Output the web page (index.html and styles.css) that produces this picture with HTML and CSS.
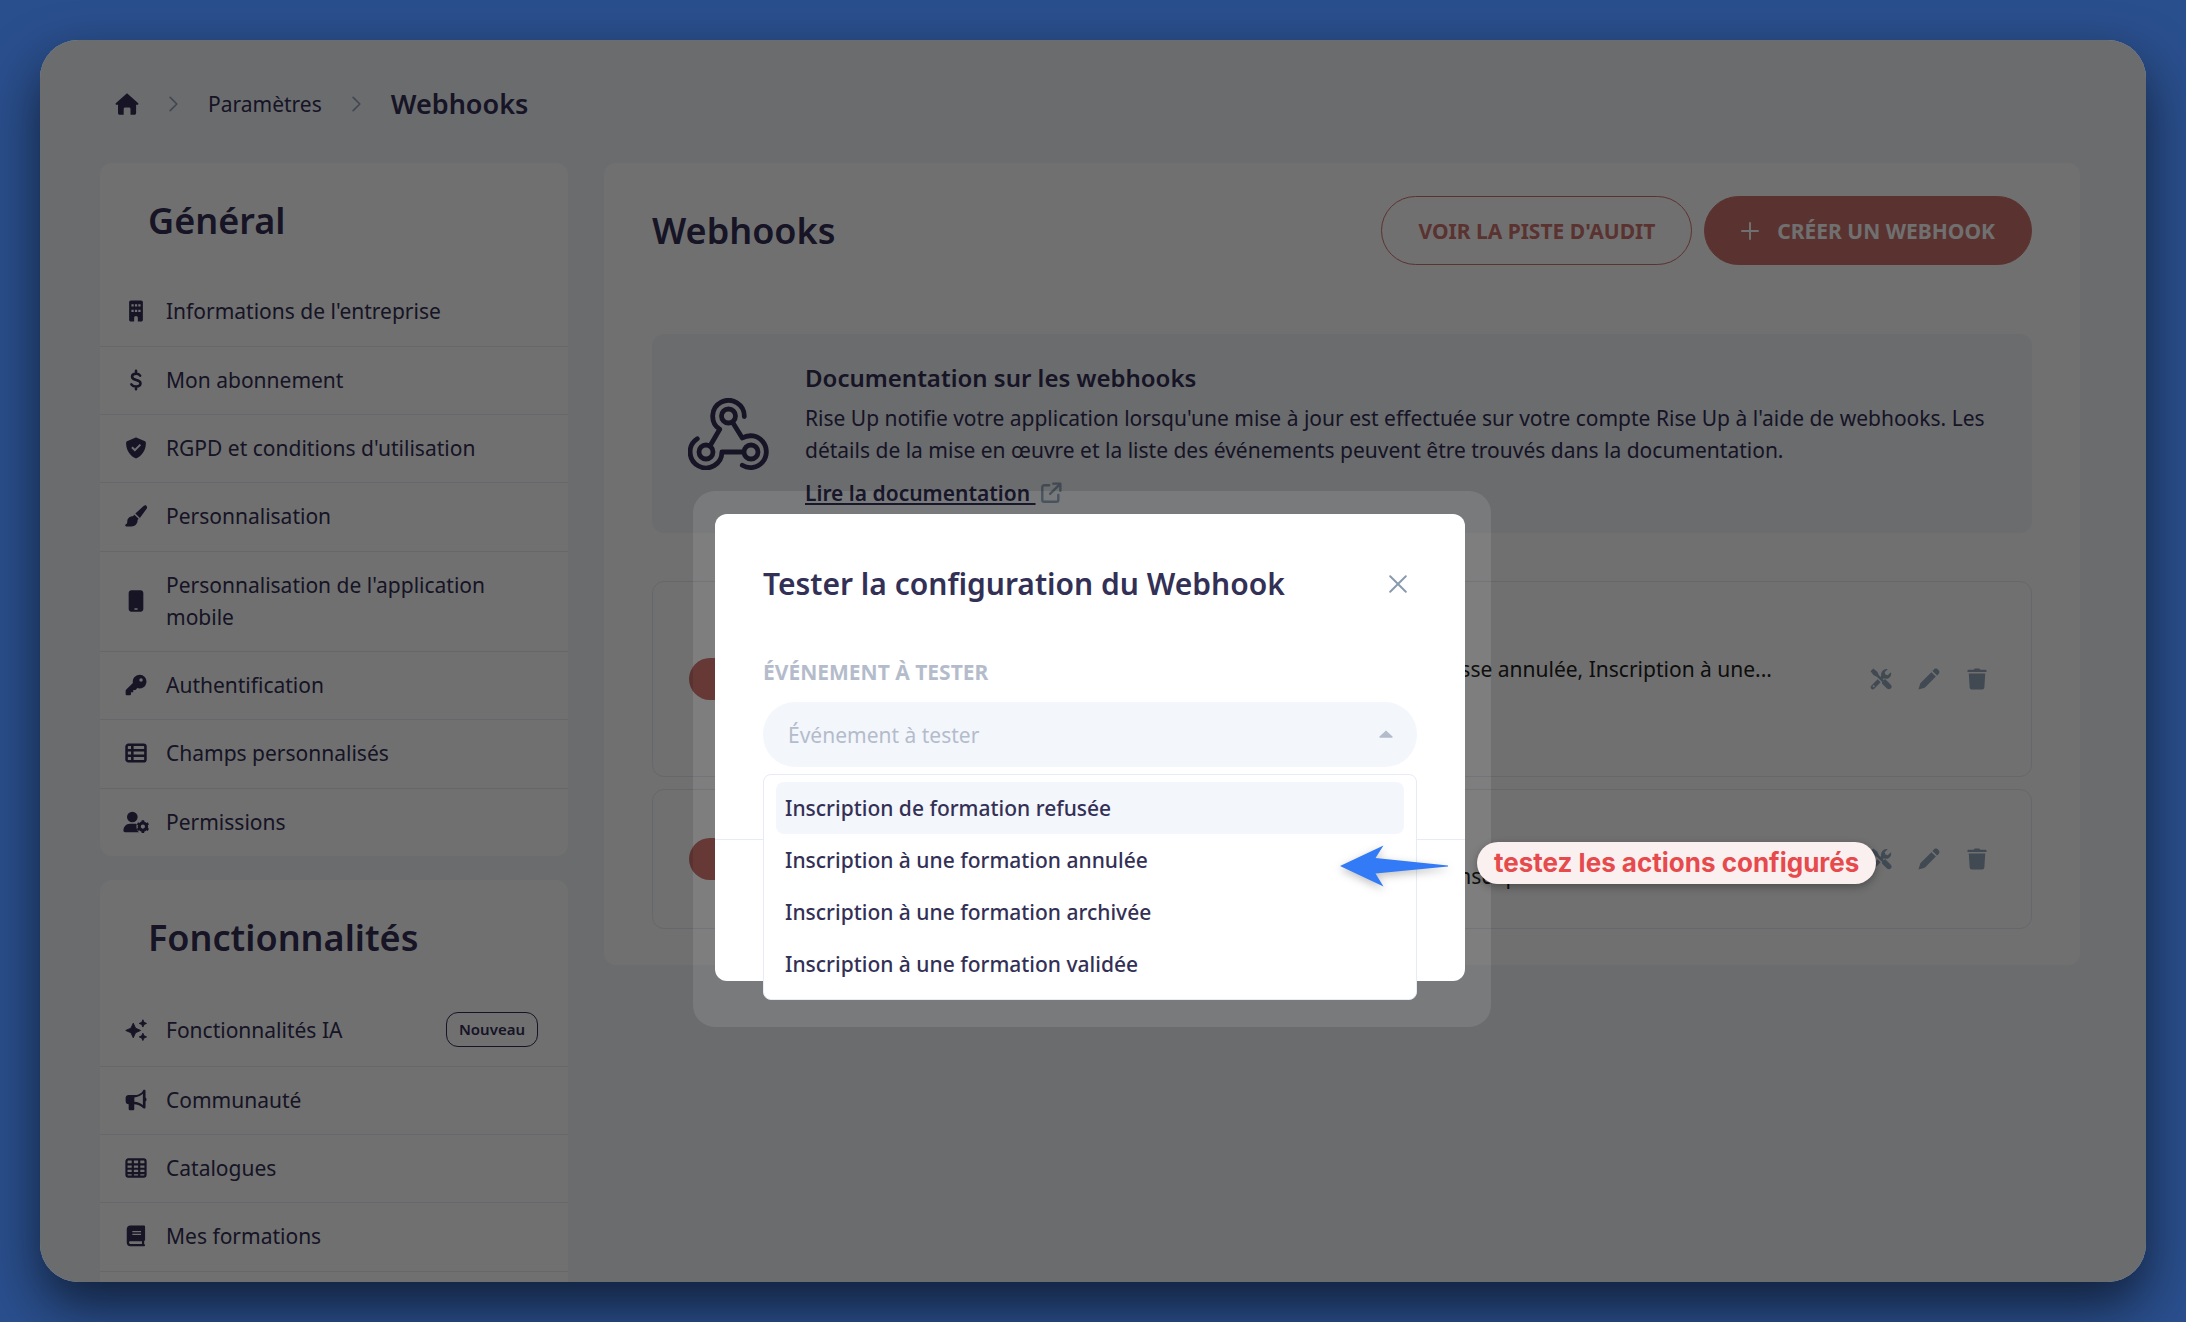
FILE: index.html
```html
<!DOCTYPE html>
<html lang="fr">
<head>
<meta charset="utf-8">
<title>Webhooks</title>
<link rel="stylesheet" href="styles.css">
</head>
<body>
<svg class="sprite" aria-hidden="true">
  <symbol id="i-home" viewBox="0 0 24 24"><path d="M12 1.2 23 11c.8.8.4 1.8-.7 1.8h-1.2V21c0 1-.7 1.8-1.8 1.8h-3.8V17c0-.8-.6-1.4-1.4-1.4h-4c-.8 0-1.4.6-1.4 1.4v5.800H4.800C3.700 22.800 3 22 3 21v-8.200H1.700C.6 12.800.2 11.800 1 11z"/></symbol>
  <symbol id="i-chev" viewBox="0 0 24 24"><path d="m8 4 8 8-8 8" fill="none" stroke="currentColor" stroke-width="2" stroke-linecap="round" stroke-linejoin="round"/></symbol>
  <symbol id="i-building" viewBox="0 0 24 24"><path fill-rule="evenodd" d="M6.500.5h11c1.300 0 2 .8 2 2v19c0 1.200-.8 2-2 2H14v-4c0-1.100-.9-2-2-2s-2 .9-2 2v4H6.500c-1.200 0-2-.8-2-2v-19c0-1.200.8-2 2-2zM7 4.500V7h2.500V4.500zm3.800 0V7h2.500V4.500zm3.700 0V7H17V4.500zM7 10.500V13h2.500v-2.500zm3.800 0V13h2.500v-2.500zm3.700 0V13H17v-2.500z"/></symbol>
  <symbol id="i-dollar" viewBox="0 0 24 24"><path d="M16.500 7.200c-1-1.500-2.700-2-4.500-2-2.700 0-4.300 1.200-4.300 3.200 0 4.700 9.200 2.400 9.200 7.200 0 2.200-2 3.400-4.700 3.400-2 0-4-.6-5.200-2.200M12 2v3M12 19v3" fill="none" stroke="currentColor" stroke-width="2.800" stroke-linecap="round"/></symbol>
  <symbol id="i-shield" viewBox="0 0 24 24"><path fill-rule="evenodd" d="M12 .6c.3 0 .6 0 .9.2l8.300 3.500c1 .4 1.600 1.200 1.600 2.300 0 4.300-1.500 12.200-9.600 16.300-.8.4-1.600.4-2.400 0C2.700 18.800 1.200 10.900 1.200 6.600c0-1.100.6-1.900 1.600-2.300L11.100.8c.3-.2.6-.2.900-.2zm5.500 8.500-1.500-1.400-5.200 5.200-2.500-2.500-1.500 1.500 4 4z"/></symbol>
  <symbol id="i-brush" viewBox="0 0 24 24"><path d="M23.300.9c1 1 .9 2.300.1 3.500l-7.200 9.700-4.900-4.900 9-8c1-.9 2.100-1.100 3-.3zM10.300 10.500l4.600 4.600-1.200 1.300c.3 4-2.700 7-6.700 7H1.500C0 23.400-.2 21.500 1 21.100c1.400-.5 1.500-2 1.500-3.300 0-3.200 2.500-5.600 6-5.600z"/></symbol>
  <symbol id="i-phone" viewBox="0 0 24 24"><path fill-rule="evenodd" d="M7 .3h10c1.700 0 3 1.300 3 3v17.400c0 1.700-1.300 3-3 3H7c-1.700 0-3-1.300-3-3V3.300c0-1.700 1.300-3 3-3zM10.300 20v1.500h3.400V20z"/></symbol>
  <symbol id="i-key" viewBox="0 0 24 24"><path fill-rule="evenodd" d="M15.800.8a7.500 7.500 0 1 1-2.300 14.600L11.500 17.500H9v2.500H6.500v2.200c0 .6-.4 1-1 1H1.700c-.6 0-1-.4-1-1v-3.800c0-.5.1-.8.4-1.100l7.500-7.500A7.500 7.500 0 0 1 15.800.8zm1.700 3.800a1.900 1.900 0 1 0 0 3.800 1.900 1.900 0 0 0 0-3.800z"/></symbol>
  <symbol id="i-list" viewBox="0 0 24 24"><g fill="none" stroke="currentColor" stroke-width="2.800"><rect x="1.700" y="3" width="20.600" height="18" rx="2"/><path d="M1.700 9h20.600M1.700 15h20.600M8 3v18"/></g></symbol>
  <symbol id="i-user" viewBox="0 0 28 24"><circle cx="10" cy="6.500" r="5.800"/><path d="M7.500 14h5c1 0 1.800.1 2.300.4-.8 2.900-.2 6.400 2.300 8.700H2C1 23.100.3 22.500.3 21.500.3 17 3.400 14 7.500 14z"/><circle cx="21.500" cy="17" r="4" fill="none" stroke="currentColor" stroke-width="3.400"/><path d="M21.500 10v3M21.500 21v3M15.500 13.500l2.500 1.500M25 19l2.500 1.500M15.500 20.500l2.500-1.500M25 15l2.500-1.500" stroke="currentColor" stroke-width="2.800"/></symbol>
  <symbol id="i-spark" viewBox="0 0 24 24"><path d="M9 4.500l2.500 5.500L17 12.500l-5.500 2.500L9 20.500 6.500 15 .8 12.500 6.500 10zM19.500.8l1.200 2.800 2.800 1.200-2.800 1.200-1.200 2.800L18.300 6l-2.800-1.200 2.800-1.200zM19.500 15.500l1.200 2.800 2.800 1.200-2.800 1.200-1.200 2.800-1.200-2.800-2.800-1.200 2.800-1.200z" stroke="currentColor" stroke-width="1" stroke-linejoin="round"/></symbol>
  <symbol id="i-horn" viewBox="0 0 24 24"><path fill-rule="evenodd" d="M21 .8c.8 0 1.400.6 1.400 1.400v7.200c.7.400 1.100 1.200 1.100 2.100s-.4 1.700-1.100 2.100V20c0 1.300-1.400 1.800-2.400 1l-2-1.600c-2.200-1.800-5-2.800-7.900-2.800v5.200c0 .8-.7 1.500-1.500 1.500H5.500c-.8 0-1.500-.7-1.500-1.500v-5.200c-1.900 0-3.300-1.400-3.300-3.300V9.800c0-1.900 1.400-3.300 3.300-3.300h6.500c2.900 0 5.600-1 7.800-2.800L20 1.200c.3-.3.600-.4 1-.4zM19.500 5.300c-2.700 2.200-5.800 3.700-9.300 4v4.500c3.500.2 6.700 1.500 9.300 3.600z"/></symbol>
  <symbol id="i-grid" viewBox="0 0 24 24"><g fill="none" stroke="currentColor" stroke-width="2.400"><rect x="1.600" y="2.600" width="20.800" height="18.800" rx="2"/><path d="M1.600 8h20.800M1.600 12.800h20.800M1.600 17.600h20.800M8.500 2.600v18.800M15.500 2.600v18.800"/></g></symbol>
  <symbol id="i-book" viewBox="0 0 24 24"><path fill-rule="evenodd" d="M5.700.5h14.800c.8 0 1.400.6 1.400 1.400v14.300c0 .7-.4 1.200-1 1.400v3c.6.1 1 .6 1 1.200 0 .8-.6 1.400-1.400 1.400H5.700c-2.200 0-3.800-1.700-3.800-3.800V4.300C1.900 2.200 3.500.5 5.700.5zM8 6.500v1.300h9.500V6.500zm0 3v1.300h9.500V9.500zM5.800 17.800c-.8 0-1.400.6-1.400 1.400s.6 1.400 1.400 1.400h12.700v-2.800z"/></symbol>
  <symbol id="i-hook" viewBox="0 0 82 72"><g fill="none" stroke="currentColor" stroke-width="4.800" stroke-linecap="round" stroke-linejoin="round"><circle cx="40.500" cy="18" r="7"/><circle cx="18" cy="54" r="7"/><circle cx="63" cy="54" r="7"/><path d="M56.300 18.500A15.800 15.800 0 1 0 31.700 31.300L22 48M45 25l9.300 15A15.900 15.900 0 1 1 54.300 67.300M9.300 40.700A15.900 15.900 0 1 0 33.900 54H55"/></g></symbol>
  <symbol id="i-ext" viewBox="0 0 24 24"><path d="M10 3.500H4.500a2 2 0 0 0-2 2v14a2 2 0 0 0 2 2H18a2 2 0 0 0 2-2V14M14.500 1.800h7.700v7.700M21.500 2.500 11 13" fill="none" stroke="currentColor" stroke-width="2.600" stroke-linecap="round" stroke-linejoin="round"/></symbol>
  <symbol id="i-tools" viewBox="0 0 24 24"><path d="M5.500 5.500 14.500 14.500" fill="none" stroke="currentColor" stroke-width="2.600"/><path d="M13.500 14.500l3-2.500 6.200 6.200c1.200 1.300 1.200 3 0 4.100-1.200 1.200-3 1.200-4.200 0L13 17zM.6 3.500 3.500.6 8 4 9.500 7.500 7.500 9.500 4 8z"/><path fill-rule="evenodd" d="M19.500 1.200 16 4.700l.8 2.500 2.500.8 3.600-3.500c1 3.500-1.400 7-5 7.200l-3-.3-1.300 1-2.500-2.500 1.100-1.300C11.500 4.300 15 .3 19.500 1.200zM8.300 12.200l3.300 3.300-7 7.200c-1 1-2.400.8-3.200 0-.9-.9-1-2.300 0-3.300zM4 18.800a1.100 1.100 0 1 0 0 2.200 1.100 1.100 0 0 0 0-2.200z"/></symbol>
  <symbol id="i-pencil" viewBox="0 0 24 24"><path d="M19.800.6c-1.200 0-1.900.4-2.700 1.200l-1.300 1.400 5 5 1.400-1.400c1.600-1.600 1.600-3.200 0-4.700-.7-.9-1.500-1.500-2.400-1.500zM14.600 4.500 19.500 9.400 8.500 20.400c-.6.6-1.200 1-2 1.300L.5 23.500l1.800-6c.3-.8.7-1.400 1.300-2z"/></symbol>
  <symbol id="i-trash" viewBox="0 0 24 24"><path d="M9.500.6h5l1.200 1.300h5.800c.5 0 .9.400.9.900v1.600H1.600V2.800c0-.5.4-.9.900-.9h5.800zM3 6h18l-1 15.200c-.1 1.300-1 2.200-2.300 2.200H6.300c-1.300 0-2.200-.9-2.300-2.200z"/></symbol>
  <symbol id="i-x" viewBox="0 0 18 18"><path d="m1.200 1.200 15.600 15.600M16.800 1.200 1.200 16.800" fill="none" stroke="currentColor" stroke-width="2" stroke-linecap="round"/></symbol>
  <symbol id="i-plus" viewBox="0 0 18 18"><path d="M9 1v16M1 9h16" fill="none" stroke="currentColor" stroke-width="2" stroke-linecap="round"/></symbol>
</svg>

<div class="frame">
  <div class="page">
    <nav class="crumbs" aria-label="Fil d'Ariane">
      <a href="#" aria-label="Accueil"><svg class="icon icon-home"><use href="#i-home"/></svg></a>
      <svg class="icon sep"><use href="#i-chev"/></svg>
      <a href="#">Paramètres</a>
      <svg class="icon sep"><use href="#i-chev"/></svg>
      <span class="here">Webhooks</span>
    </nav>
    <div class="columns">
      <aside class="side">
        <section class="card">
          <h2 class="side-title">Général</h2>
          <ul class="menu">
            <li><a href="#"><svg class="icon"><use href="#i-building"/></svg><span>Informations de l'entreprise</span></a></li>
            <li><a href="#"><svg class="icon"><use href="#i-dollar"/></svg><span>Mon abonnement</span></a></li>
            <li><a href="#"><svg class="icon"><use href="#i-shield"/></svg><span>RGPD et conditions d'utilisation</span></a></li>
            <li><a href="#"><svg class="icon"><use href="#i-brush"/></svg><span>Personnalisation</span></a></li>
            <li><a href="#"><svg class="icon"><use href="#i-phone"/></svg><span>Personnalisation de l'application mobile</span></a></li>
            <li><a href="#"><svg class="icon"><use href="#i-key"/></svg><span>Authentification</span></a></li>
            <li><a href="#"><svg class="icon"><use href="#i-list"/></svg><span>Champs personnalisés</span></a></li>
            <li><a href="#"><svg class="icon icon-user"><use href="#i-user"/></svg><span>Permissions</span></a></li>
          </ul>
        </section>
        <section class="card">
          <h2 class="side-title">Fonctionnalités</h2>
          <ul class="menu">
            <li><a href="#"><svg class="icon"><use href="#i-spark"/></svg><span>Fonctionnalités IA</span><span class="tag">Nouveau</span></a></li>
            <li><a href="#"><svg class="icon"><use href="#i-horn"/></svg><span>Communauté</span></a></li>
            <li><a href="#"><svg class="icon"><use href="#i-grid"/></svg><span>Catalogues</span></a></li>
            <li><a href="#"><svg class="icon"><use href="#i-book"/></svg><span>Mes formations</span></a></li>
            <li><a href="#"></a></li>
          </ul>
        </section>
      </aside>
      <main class="card main">
        <header class="main-head">
          <h1>Webhooks</h1>
          <div class="actions">
            <button class="btn" type="button">VOIR LA PISTE D'AUDIT</button>
            <button class="btn btn-fill" type="button"><svg class="icon icon-plus"><use href="#i-plus"/></svg>CRÉER UN WEBHOOK</button>
          </div>
        </header>
        <section class="docs">
          <svg class="icon icon-hook"><use href="#i-hook"/></svg>
          <div>
            <h3>Documentation sur les webhooks</h3>
            <p>Rise Up notifie votre application lorsqu'une mise à jour est effectuée sur votre compte Rise Up à l'aide de webhooks. Les détails de la mise en œuvre et la liste des événements peuvent être trouvés dans la documentation.</p>
            <a class="doc-link" href="#">Lire la documentation&nbsp;</a><svg class="icon icon-ext"><use href="#i-ext"/></svg>
          </div>
        </section>
        <ul class="hooks">
          <li class="hook hook-tall">
            <input class="toggle" type="checkbox" checked aria-label="Activer le webhook">
            <p class="hook-text hook-text-first">Inscription à une classe annulée, Inscription à une...</p>
            <div class="tools">
              <button type="button" aria-label="Tester"><svg class="icon"><use href="#i-tools"/></svg></button>
              <button type="button" aria-label="Modifier"><svg class="icon"><use href="#i-pencil"/></svg></button>
              <button type="button" aria-label="Supprimer"><svg class="icon"><use href="#i-trash"/></svg></button>
            </div>
          </li>
          <li class="hook">
            <input class="toggle" type="checkbox" checked aria-label="Activer le webhook">
            <p class="hook-text hook-text-last">Inscription à une formation annulée...</p>
            <div class="tools">
              <button type="button" aria-label="Tester"><svg class="icon"><use href="#i-tools"/></svg></button>
              <button type="button" aria-label="Modifier"><svg class="icon"><use href="#i-pencil"/></svg></button>
              <button type="button" aria-label="Supprimer"><svg class="icon"><use href="#i-trash"/></svg></button>
            </div>
          </li>
        </ul>
      </main>
    </div>
  </div>
  <div class="overlay"></div>
  <div class="halo">
    <section class="modal" role="dialog" aria-labelledby="modal-title">
      <header class="modal-head">
        <h2 id="modal-title">Tester la configuration du Webhook</h2>
        <button class="close" type="button" aria-label="Fermer"><svg class="icon"><use href="#i-x"/></svg></button>
      </header>
      <div class="field">
        <label for="event">ÉVÉNEMENT À TESTER</label>
        <div class="combo">
          <input id="event" type="text" role="combobox" aria-expanded="true" aria-controls="events" placeholder="Événement à tester">
          <svg class="caret" viewBox="0 0 14 8"><path d="M7 .5 13.500 6.500c.5.6.2 1.200-.6 1.200H1.100C.3 7.700 0 7.100.5 6.500z"/></svg>
          <ul class="options" id="events" role="listbox">
            <li class="active" role="option" aria-selected="true">Inscription de formation refusée</li>
            <li role="option" aria-selected="false">Inscription à une formation annulée</li>
            <li role="option" aria-selected="false">Inscription à une formation archivée</li>
            <li role="option" aria-selected="false">Inscription à une formation validée</li>
          </ul>
        </div>
      </div>
      <footer class="modal-foot"></footer>
    </section>
  </div>
</div>

<svg class="arrow" viewBox="0 0 110 42"><path d="M0 21 43.500.5 35.500 13 108 20.500v1L35.500 28.500 43.500 41.500z"/></svg>
<div class="note">testez les actions configurés</div>
</body>
</html>
```

FILE: styles.css
```css
* { box-sizing: border-box; }

body {
  margin: 0;
  height: 100vh;
  padding: 40px;
  overflow: hidden;
  position: relative;
  background: #2a4f8d;
  color: #333056;
  font: 21px/32px "Noto Sans", sans-serif;
}

h1, h2, h3, p, ul { margin: 0; padding: 0; }
ul { list-style: none; }
a { color: inherit; text-decoration: none; }
button { font: inherit; color: inherit; border: 0; background: none; padding: 0; }

.sprite { display: none; }
.icon { width: 22px; height: 22px; fill: currentColor; flex: none; display: block; }

.frame {
  height: 100%;
  position: relative;
  overflow: hidden;
  border-radius: 38px;
  background: #f3f6fb;
}
body::before {
  content: "";
  position: absolute;
  inset: 40px;
  border-radius: 38px;
  box-shadow: 0 24px 54px rgba(0, 0, 0, .6);
}
.overlay { position: absolute; inset: 0; background: rgba(0, 0, 0, .505); }

.page { padding: 40px 66px 0 60px; }

.crumbs { display: flex; align-items: center; gap: 24px; height: 48px; padding-left: 15px; }
.icon-home { width: 24px; height: 24px; }
.sep { color: #94a3b8; width: 21px; height: 20px; }
.here { font-size: 27px; font-weight: 600; }

.columns { display: grid; grid-template-columns: 468px 1fr; gap: 36px; padding-top: 35px; align-items: start; }
.side { display: grid; gap: 24px; }
.card { background: #fff; border-radius: 12px; }

.side-title { font-size: 36px; line-height: 50px; font-weight: 600; padding: 33px 48px 32px; }
.menu a { display: flex; align-items: center; gap: 19px; padding: 17px 30px 18px 25px; }
.menu li { border-bottom: 1px solid #e8ebf4; }
.menu li:nth-child(3n+1) a { padding-bottom: 19px; }
.menu li:last-child { border-bottom: 0; }
.icon-user { width: 26px; height: 22px; margin: 0 -2px; }
.tag {
  margin-left: auto;
  border: 1px solid #333056;
  border-radius: 12px;
  padding: 0 12px;
  font-size: 15px;
  line-height: 33px;
  font-weight: 600;
}

.main { padding: 33px 48px 36px; }
.main-head { display: flex; justify-content: space-between; align-items: center; }
h1 { font-size: 36px; line-height: 50px; font-weight: 600; }
.actions { display: flex; gap: 12px; }
.btn {
  display: flex;
  align-items: center;
  gap: 18px;
  height: 69px;
  padding: 0 36px;
  border: 1px solid #cf746f;
  border-radius: 35px;
  color: #cf746f;
  font-weight: 700;
}
.btn-fill { background: #cf746f; color: #fff; }
.icon-plus { width: 18px; height: 18px; }

.docs {
  display: flex;
  align-items: center;
  gap: 35px;
  margin-top: 69px;
  padding: 28px 36px 24px;
  border-radius: 12px;
  background: #f3f6fb;
}
.icon-hook { width: 82px; height: 72px; margin-bottom: 4px; }
.docs h3 { font-size: 24px; font-weight: 600; margin-bottom: 8px; }
.docs p { margin-bottom: 11px; }
.docs div { flex: 1; }
.doc-link { font-weight: 600; text-decoration: underline; }
.icon-ext { display: inline-block; vertical-align: -3px; margin-left: 4px; color: #94a8bd; }

.hooks { display: grid; gap: 12px; margin-top: 48px; }
.hook {
  display: flex;
  align-items: center;
  height: 140px;
  padding: 0 43px 0 36px;
  border: 1px solid #e8ebf4;
  border-radius: 12px;
  color: #222;
}
.hook-tall { height: 196px; }
.toggle { appearance: none; margin: 0; width: 78px; height: 42px; border-radius: 21px; background: #cf746f; }
.hook-text { flex: 1; min-width: 0; white-space: nowrap; text-align: right; }
.hook-text-first { padding: 0 98px 20px 0; }
.hook-text-last { padding: 34px 46px 0 0; }
.tools { display: flex; gap: 26px; color: #94a8bd; }

/* The spread shadow darkens the rest of the frame a little more than the halo. */
.halo {
  position: absolute;
  left: 653px;
  top: 451px;
  width: 798px;
  padding: 23px 26px 46px 22px;
  border-radius: 22px;
  box-shadow: 0 0 0 2000px rgba(0, 0, 0, .11);
}
.modal { border-radius: 12px; background: #fff; }
.modal-head { display: flex; justify-content: space-between; align-items: center; padding: 47px 58px 49px 48px; }
.modal-head h2 { font-size: 30px; line-height: 46px; font-weight: 600; }
.close { color: #8a9baf; }
.close .icon { width: 18px; height: 18px; }
.field { padding: 0 48px 72px; }
.field label { display: block; margin-bottom: 14px; font-weight: 700; color: #b4bccb; }
.combo { position: relative; }
.combo input {
  display: block;
  width: 100%;
  height: 65px;
  padding: 0 25px;
  border: 0;
  border-radius: 32px;
  background: #f3f6fb;
  font: inherit;
}
.combo input::placeholder { color: #b4bccb; opacity: 1; }
.caret { position: absolute; right: 24px; top: 28px; width: 14px; height: 8px; fill: #b4bccb; }
.options {
  position: absolute;
  left: 0;
  right: 0;
  top: 72px;
  padding: 7px 12px 9px;
  border: 1px solid #e7ebf5;
  border-radius: 8px;
  background: #fff;
  font-weight: 500;
}
.options li { padding: 10px 9px; line-height: 32px; border-radius: 8px; }
.options .active { background: #f3f6fb; }
.modal-foot { height: 142px; border-top: 1px solid #e7ebf5; }

.arrow {
  position: absolute;
  left: 1340px;
  top: 845px;
  width: 110px;
  height: 42px;
  fill: #337af6;
  overflow: visible;
  filter: drop-shadow(0 3px 4px rgba(0, 0, 0, .25));
}
.note {
  position: absolute;
  left: 1477px;
  top: 842px;
  padding: 0 17px;
  border-radius: 21px;
  background: #fbf0f0;
  color: #e74a4c;
  font: 700 26px/42px Inter, sans-serif;
  box-shadow: 0 3px 8px rgba(0, 0, 0, .3);
}
```
